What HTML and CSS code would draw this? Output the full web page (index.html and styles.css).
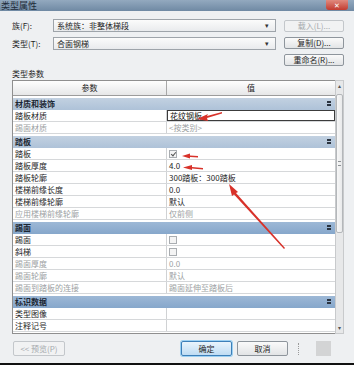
FILE: index.html
```html
<!DOCTYPE html>
<html lang="zh-CN">
<head>
    <meta charset="UTF-8">
    <title>类型属性</title>
    <link rel="stylesheet" href="styles.css">
</head>
<body>

    <section class="window">
        <div class="titlebar">
            <span class="title">类型属性</span>
            <span class="close">✕</span>
        </div>

        <div class="content">
            <div class="top">
                <div class="fields">
                    <div class="field">
                        <span class="label">族(F):</span>
                        <div class="select">系统族：非整体梯段<span class="arrow">▾</span></div>
                    </div>
                    <div class="field">
                        <span class="label">类型(T):</span>
                        <div class="select">合面钢梯<span class="arrow">▾</span></div>
                    </div>
                </div>
                <div class="side-buttons">
                    <div class="btn disabled">载入(L)...</div>
                    <div class="btn">复制(D)...</div>
                    <div class="btn">重命名(R)...</div>
                </div>
            </div>

            <div class="caption">类型参数</div>

            <div class="grid-wrap">
                <div class="table">
                    <div class="head">
                        <div class="hcell">参数</div>
                        <div class="hcell">值</div>
                    </div>

                    <div class="sec light">材质和装饰<span class="fold"></span></div>
                    <div class="row">
                        <div class="name">踏板材质</div>
                        <div class="val"><div class="edit">花纹钢板</div></div>
                    </div>
                    <div class="row off">
                        <div class="name">踢面材质</div>
                        <div class="val">&lt;按类别&gt;</div>
                    </div>

                    <div class="sec light">踏板<span class="fold"></span></div>
                    <div class="row">
                        <div class="name">踏板</div>
                        <div class="val"><span class="check on"></span></div>
                    </div>
                    <div class="row">
                        <div class="name">踏板厚度</div>
                        <div class="val">4.0</div>
                    </div>
                    <div class="row">
                        <div class="name">踏板轮廓</div>
                        <div class="val">300踏板：300踏板</div>
                    </div>
                    <div class="row">
                        <div class="name">楼梯前缘长度</div>
                        <div class="val">0.0</div>
                    </div>
                    <div class="row">
                        <div class="name">楼梯前缘轮廓</div>
                        <div class="val">默认</div>
                    </div>
                    <div class="row off">
                        <div class="name">应用楼梯前缘轮廓</div>
                        <div class="val">仅前侧</div>
                    </div>

                    <div class="sec dark">踢面<span class="fold"></span></div>
                    <div class="row">
                        <div class="name">踢面</div>
                        <div class="val"><span class="check"></span></div>
                    </div>
                    <div class="row">
                        <div class="name">斜梯</div>
                        <div class="val"><span class="check"></span></div>
                    </div>
                    <div class="row off">
                        <div class="name">踢面厚度</div>
                        <div class="val">0.0</div>
                    </div>
                    <div class="row off">
                        <div class="name">踢面轮廓</div>
                        <div class="val">默认</div>
                    </div>
                    <div class="row off">
                        <div class="name">踢面到踏板的连接</div>
                        <div class="val">踢面延伸至踏板后</div>
                    </div>

                    <div class="sec dark">标识数据<span class="fold"></span></div>
                    <div class="row">
                        <div class="name">类型图像</div>
                        <div class="val"></div>
                    </div>
                    <div class="row">
                        <div class="name">注释记号</div>
                        <div class="val"></div>
                    </div>
                </div>

                <div class="scrollbar">
                    <span class="sb-arrow">▴</span>
                    <div class="track">
                        <div class="thumb"><span class="grip"></span></div>
                    </div>
                    <span class="sb-arrow">▾</span>
                </div>
            </div>

            <div class="footer">
                <div class="btn disabled preview">&lt;&lt; 预览(P)</div>
                <div class="actions">
                    <div class="btn default">确定</div>
                    <div class="btn">取消</div>
                </div>
                <span class="resize"></span>
                <span class="patch"></span>
            </div>
        </div>

        <!-- annotation arrows drawn over the dialog -->
        <svg class="marks" width="354" height="363" viewBox="0 0 354 363">
            <g fill="#d8322a">
                <polygon points="222,112 207,116 208,114 197,119 208,121 207,118 222,113.5"/>
                <polygon points="198,156 190,155.5 190,153.5 182,156 190,158.5 190,157 198,157.5"/>
                <polygon points="203,168 192,167 192,165 183,167.5 192,170 192,168.5 203,169.5"/>
                <polygon points="285,248 236,193 238,192 229,184 232,196 234,194.5 284,249"/>
            </g>
        </svg>
    </section>
    <div class="edge"></div>

</body>
</html>
```

FILE: styles.css
```css
body{
    margin: 0;
    background-color: #ffffff;
    font-family: "Noto Sans CJK SC", "Liberation Sans", sans-serif;
    font-size: 8px;
    color: #1e1e1e;
}

.window{
    position: relative;
    width: 354px;
    height: 363px;
    background-color: #eef0f2;
    overflow: hidden;
}

.titlebar{
    height: 11px;
    background: linear-gradient(#93a9bf, #6f89a3);
    display: flex;
    justify-content: space-between;
}

.title{
    font-size: 9px;
    line-height: 11px;
    color: #1f2c3a;
    margin-left: 1px;
}

.close{
    width: 22px;
    height: 10px;
    margin-right: 6px;
    background: linear-gradient(#e08a7e, #c23b30);
    border-radius: 0 0 3px 3px;
    color: #ffffff;
    font-size: 7px;
    line-height: 10px;
    text-align: center;
}

.content{
    padding: 8px 10px 0 12px;
}

.top{
    display: flex;
    justify-content: space-between;
}

.fields{
    width: 264px;
    display: flex;
    flex-direction: column;
    gap: 5px;
}

.field{
    display: flex;
    align-items: center;
}

.label{
    width: 41px;
    line-height: 13px;
}

.select{
    flex: 1;
    height: 13px;
    box-sizing: border-box;
    border: 1px solid #9ea4aa;
    background: linear-gradient(#fbfbfb, #e9ebed);
    padding-left: 3px;
    line-height: 11px;
    display: flex;
    justify-content: space-between;
}

.arrow{
    width: 10px;
    font-size: 7px;
    color: #333;
}

.side-buttons{
    width: 60px;
    padding-top: 1px;
    display: flex;
    flex-direction: column;
    gap: 5px;
}

.btn{
    height: 12px;
    box-sizing: border-box;
    border: 1px solid #8e959c;
    border-radius: 2px;
    background: linear-gradient(#fafafa, #e2e4e6);
    text-align: center;
    line-height: 10px;
    font-size: 8px;
}

.btn.disabled{
    color: #a4a8ac;
    border-color: #c3c7cb;
    background: #f1f2f3;
}

.caption{
    margin-top: 3px;
    height: 11px;
    line-height: 10px;
}

.grid-wrap{
    display: flex;
    width: 332px;
    height: 254px;
}

.table{
    width: 323px;
    background-color: #ffffff;
    border: 1px solid #8f8f8f;
    border-right: none;
    box-sizing: border-box;
}

.head{
    display: grid;
    grid-template-columns: 154px 1fr;
    height: 15px;
    background: linear-gradient(#fefefe, #e6e7e8);
    border-bottom: 1px solid #9c9c9c;
    box-sizing: border-box;
}

.hcell{
    text-align: center;
    line-height: 14px;
}

.hcell:first-child{
    border-right: 1px solid #a8a8a8;
}

.sec{
    margin-top: 2px;
    height: 12px;
    padding-left: 2px;
    line-height: 12px;
    font-weight: bold;
    color: #1c2733;
    display: flex;
    justify-content: space-between;
}

.sec.light{ background: linear-gradient(#c2d1e1, #aec2d8); }
.sec.dark{ background: linear-gradient(#9db8d6, #86a7cb); }

.fold{
    width: 4px;
    height: 5px;
    margin: 3px 4px 0 0;
    border-top: 2px solid #2b3440;
    border-bottom: 2px solid #2b3440;
    box-sizing: border-box;
}

.row{
    display: grid;
    grid-template-columns: 154px 1fr;
    height: 12px;
    border-bottom: 1px solid #d6d8da;
    box-sizing: border-box;
    line-height: 11px;
}

.name{
    padding-left: 2px;
    border-right: 1px solid #d0d2d4;
}

.val{
    padding-left: 2px;
    display: flex;
    align-items: center;
}

.row.off{ color: #9c9fa3; }

.edit{
    margin-left: -2px;
    flex: 1;
    height: 11px;
    box-sizing: border-box;
    border: 1px solid #3c3c3c;
    padding-left: 2px;
    line-height: 9px;
    color: #111;
}

.check{
    width: 6px;
    height: 6px;
    border: 1px solid #a9adb1;
    background-color: #f4f4f4;
    position: relative;
}

.check.on::after{
    content: "";
    position: absolute;
    left: 1.5px;
    top: 0;
    width: 2px;
    height: 4px;
    border: solid #555;
    border-width: 0 1px 1px 0;
    transform: rotate(40deg);
}

.scrollbar{
    width: 9px;
    background-color: #e7e8e9;
    border: 1px solid #c8cacc;
    box-sizing: border-box;
    display: flex;
    flex-direction: column;
}

.sb-arrow{
    height: 10px;
    font-size: 6px;
    line-height: 10px;
    text-align: center;
    color: #555;
}

.track{
    flex: 1;
    padding-top: 3px;
}

.thumb{
    height: 139px;
    background: linear-gradient(90deg, #f7f7f7, #e9eaeb);
    border: 1px solid #b4b7ba;
    border-radius: 2px;
    box-sizing: border-box;
    display: flex;
    align-items: center;
    justify-content: center;
}

.grip{
    width: 3px;
    height: 3px;
    border-top: 1px solid #8d9195;
    border-bottom: 1px solid #8d9195;
}

.footer{
    margin-top: 7px;
    display: flex;
    align-items: center;
}

.preview{
    width: 52px;
    margin-left: 1px;
    height: 15px;
    line-height: 13px;
}

.actions{
    margin-left: 116px;
    display: flex;
    gap: 5px;
}

.actions .btn{
    width: 51px;
    height: 15px;
    line-height: 13px;
}

.btn.default{
    border-color: #3d7fb8;
    background: linear-gradient(#e9f4fc, #bfdcf3);
    box-shadow: 0 0 0 1px #9cd0f2;
}

.resize{
    margin-left: 10px;
    width: 5px;
    height: 12px;
    border-left: 1px dotted #9a9a9a;
}

.patch{
    margin-left: 12px;
    width: 15px;
    height: 15px;
    background-color: #d3d4d5;
}

.marks{
    position: absolute;
    left: 0;
    top: 0;
}

.edge{
    height: 2px;
    background-color: #111111;
}
```
